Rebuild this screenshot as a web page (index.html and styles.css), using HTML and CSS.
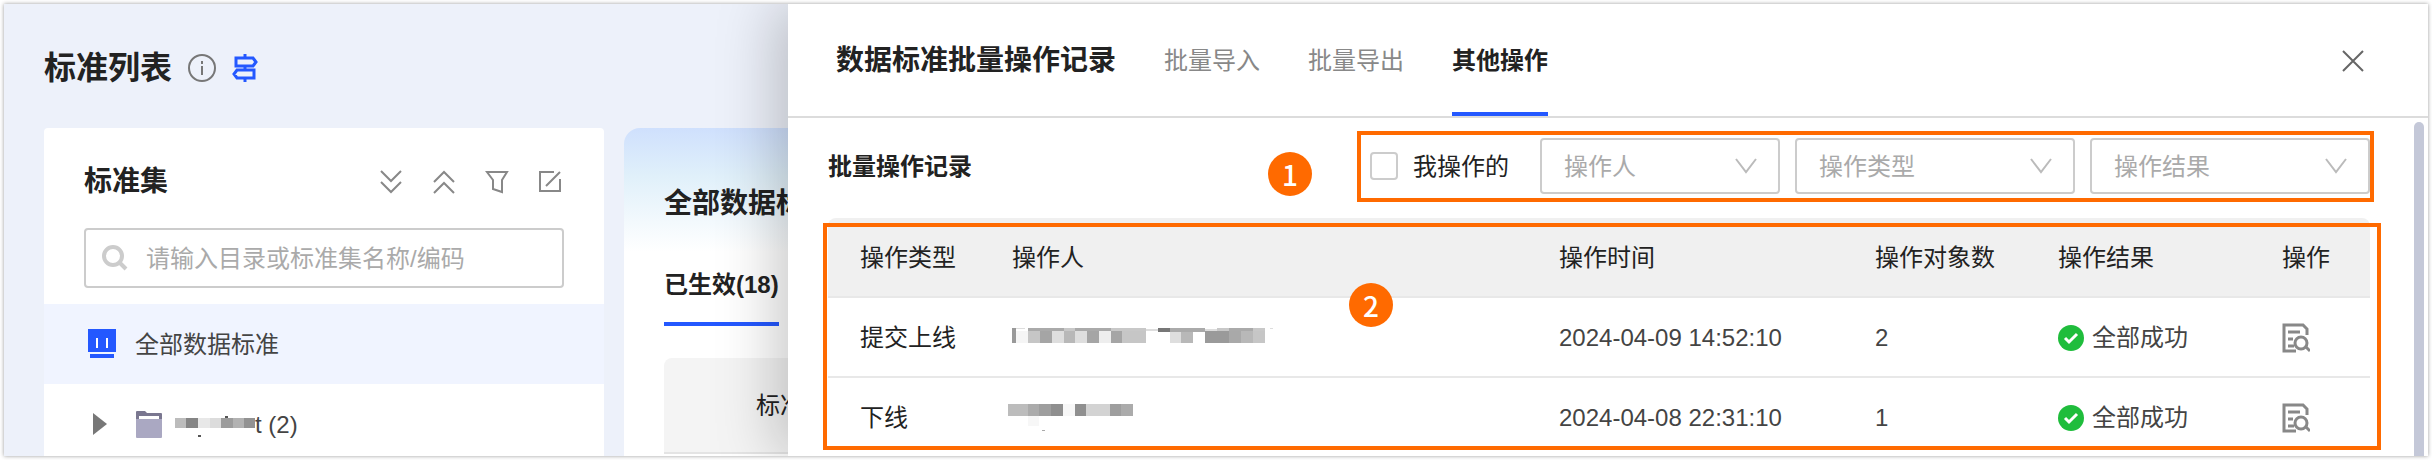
FILE: index.html
```html
<!DOCTYPE html>
<html lang="zh-CN">
<head>
    <meta charset="UTF-8">
    <meta name="viewport" content="width=device-width, initial-scale=1.0">
    <title>标准列表</title>
    <link rel="stylesheet" href="styles.css">
</head>
<body>
    <div class="frame">
        <main class="page">
            <div class="page-head">
                <h1>标准列表</h1>
                <svg class="info" width="28" height="28" viewBox="0 0 28 28" fill="none" stroke="#777" stroke-width="2">
                    <circle cx="14" cy="14" r="13"/>
                    <path d="M14 12v9M14 7v3"/>
                </svg>
                <svg class="guide" width="26" height="28" viewBox="0 0 26 28" fill="none" stroke="#2458ff" stroke-width="3">
                    <path d="M4 4h17l3 4-3 4H4zM22 16H5l-3 4 3 4h17zM13 0v4M13 12v4M13 24v4"/>
                </svg>
            </div>

            <div class="columns">
                <section class="sets">
                    <div class="sets-head">
                        <h2>标准集</h2>
                        <div class="tools">
                            <button type="button" aria-label="展开">
                                <svg width="24" height="24" viewBox="0 0 24 24"><path d="M2 1l10 10L22 1M2 12l10 10 10-10"/></svg>
                            </button>
                            <button type="button" aria-label="收起">
                                <svg width="24" height="24" viewBox="0 0 24 24"><path d="M2 12L12 2l10 10M2 23l10-10 10 10"/></svg>
                            </button>
                            <button type="button" aria-label="筛选">
                                <svg width="24" height="24" viewBox="0 0 24 24"><path d="M2 2h20l-5 8v12l-9-3v-9z"/></svg>
                            </button>
                            <button type="button" aria-label="编辑">
                                <svg width="24" height="24" viewBox="0 0 24 24"><path d="M16 2H2v19h20V9M8 16L22 2"/></svg>
                            </button>
                        </div>
                    </div>
                    <div class="search">
                        <svg width="26" height="26" viewBox="0 0 26 26" fill="none" stroke="#ccc" stroke-width="4">
                            <circle cx="11" cy="11" r="9"/>
                            <path d="M17 17l7 7"/>
                        </svg>
                        <input type="text" aria-label="搜索" placeholder="请输入目录或标准集名称/编码">
                    </div>
                    <div class="tree-row all">
                        <svg width="30" height="30" viewBox="0 0 30 30">
                            <path fill="#2458ff" d="M1 0h28v23H1zM3 25h24v4H3z"/>
                            <path stroke="#fff" stroke-width="2" d="M10 9v10M20 9v10"/>
                        </svg>
                        <span>全部数据标准</span>
                    </div>
                    <div class="tree-row folder">
                        <svg class="arrow" width="14" height="24" viewBox="0 0 14 24"><path fill="#777" d="M0 1l14 11L0 23z"/></svg>
                        <svg width="26" height="27" viewBox="0 0 26 27">
                            <path fill="#7a7790" d="M0 1a1 1 0 0 1 1-1h8l2 2h14a1 1 0 0 1 1 1v10H0z"/>
                            <path fill="#fff" d="M3 5h20v5H3z"/>
                            <path fill="#aaa8c2" d="M0 8h26v18a1 1 0 0 1-1 1H1a1 1 0 0 1-1-1z"/>
                        </svg>
                        <div class="folder-name">
                            <svg width="80" height="26" viewBox="0 0 80 26">
                                <path fill="#bcbcbc" d="M0 7h11v10H0z"/>
                                <path fill="#858585" d="M11 7h12v10H11z"/>
                                <path fill="#e8e8e8" d="M23 7h12v10H23z"/>
                                <path fill="#dcdcdc" d="M35 7h11v10H35z"/>
                                <path fill="#9c9c9c" d="M46 7h12v10H46z"/>
                                <path fill="#b2b2b2" d="M58 7h11v10H58z"/>
                                <path fill="#929292" d="M69 7h11v10H69z"/>
                                <path fill="#555" d="M23 24h3v2h-3zM50 5h3v2h-3z"/>
                            </svg>
                            <span>t (2)</span>
                        </div>
                    </div>
                </section>

                <section class="standards">
                    <h2>全部数据标准</h2>
                    <a class="state" href="#">已生效(18)</a>
                    <div class="grid-head">标准</div>
                </section>
            </div>
        </main>

        <aside class="drawer">
            <header class="drawer-head">
                <h2>数据标准批量操作记录</h2>
                <nav>
                    <a href="#">批量导入</a>
                    <a href="#">批量导出</a>
                    <a href="#" class="active">其他操作</a>
                </nav>
                <button type="button" class="close" aria-label="关闭">
                    <svg width="22" height="22" viewBox="0 0 22 22" fill="none" stroke="#666" stroke-width="2"><path d="M1 1l20 20M21 1L1 21"/></svg>
                </button>
            </header>

            <div class="drawer-body">
                <div class="toolbar">
                    <h3>批量操作记录</h3>
                    <form class="filters">
                        <input type="checkbox" id="mine">
                        <label for="mine">我操作的</label>
                        <div class="select short">
                            <select aria-label="操作人"><option>操作人</option></select>
                            <svg width="22" height="16" viewBox="0 0 22 16"><path d="M1 1l10 13L21 1"/></svg>
                        </div>
                        <div class="select">
                            <select aria-label="操作类型"><option>操作类型</option></select>
                            <svg width="22" height="16" viewBox="0 0 22 16"><path d="M1 1l10 13L21 1"/></svg>
                        </div>
                        <div class="select">
                            <select aria-label="操作结果"><option>操作结果</option></select>
                            <svg width="22" height="16" viewBox="0 0 22 16"><path d="M1 1l10 13L21 1"/></svg>
                        </div>
                        <div class="callout callout-filters"></div>
                        <span class="badge badge-filters">1</span>
                    </form>
                </div>

                <div class="records">
                    <table>
                        <colgroup>
                            <col class="c-type"><col class="c-user"><col class="c-time"><col class="c-count"><col class="c-result"><col class="c-action">
                        </colgroup>
                        <thead>
                            <tr>
                                <th>操作类型</th>
                                <th>操作人</th>
                                <th>操作时间</th>
                                <th>操作对象数</th>
                                <th>操作结果</th>
                                <th>操作</th>
                            </tr>
                        </thead>
                        <tbody>
                            <tr>
                                <td class="type">提交上线</td>
                                <td>
                                    <svg width="262" height="28" viewBox="0 0 262 28">
                                        <path fill="#999" d="M0 4h4v15H0z"/>
                                        <path fill="#f5f5f5" d="M4 7h12v12H4z"/>
                                        <path fill="#c6c6c6" d="M16 7h12v12H16zM110 7h24v12h-24zM241 7h12v12h-12z"/>
                                        <path fill="#a5a5a5" d="M28 7h12v12H28zM75 7h12v12H75zM99 7h11v12H99z"/>
                                        <path fill="#dedede" d="M40 7h12v12H40zM63 7h12v12H63zM158 7h11v12h-11z"/>
                                        <path fill="#b8b8b8" d="M52 7h11v12H52zM169 7h12v12h-12zM229 7h12v12h-12z"/>
                                        <path fill="#eee" d="M87 7h12v12H87z"/>
                                        <path fill="#9a9a9a" d="M193 7h24v12h-24z"/>
                                        <path fill="#a9a9a9" d="M217 7h12v12h-12z"/>
                                        <path fill="#777" d="M146 4h12v4h-12z"/>
                                        <path fill="#aaa" d="M16 4h36v3H16zM63 4h36v3H63zM158 4h35v4h-35zM217 4h24v3h-24z"/>
                                        <path fill="#c8c8c8" d="M52 4h11v3H52zM99 4h35v3H99zM205 4h12v3h-12zM241 4h12v3h-12z"/>
                                        <path fill="#ddd" d="M4 4h9v1H4zM134 5h12v2h-12zM193 5h12v2h-12zM258 4h3v1h-3z"/>
                                    </svg>
                                </td>
                                <td>2024-04-09 14:52:10</td>
                                <td>2</td>
                                <td>
                                    <div class="result">
                                        <svg width="26" height="26" viewBox="0 0 26 26"><circle cx="13" cy="13" r="13" fill="#1fbd3c"/><path d="M7 13l4 4 8-8" fill="none" stroke="#fff" stroke-width="3"/></svg>
                                        <span>全部成功</span>
                                    </div>
                                </td>
                                <td>
                                    <button type="button" class="detail" aria-label="查看详情">
                                        <svg width="28" height="30" viewBox="0 0 28 30"><path d="M25 12V6l-4-4H2v26h12M6 9h12M6 16h5M6 23h6M24 24l4 4"/><circle cx="19" cy="20" r="6"/></svg>
                                    </button>
                                </td>
                            </tr>
                            <tr>
                                <td class="type">下线</td>
                                <td>
                                    <svg class="shifted" width="126" height="38" viewBox="0 0 126 38">
                                        <path fill="#bcbcbc" d="M0 5h20v12H0z"/>
                                        <path fill="#ababab" d="M20 5h11v12H20zM113 5h12v12h-12z"/>
                                        <path fill="#9e9e9e" d="M31 5h12v12H31zM102 5h11v12h-11z"/>
                                        <path fill="#8f8f8f" d="M43 5h12v12H43zM67 5h11v12H67z"/>
                                        <path fill="#d3d3d3" d="M78 5h24v12H78z"/>
                                        <path fill="#f7f7f7" d="M55 5h12v12H55zM20 17h11v10H20z"/>
                                        <path fill="#aaa" d="M34 31h3v1h-3z"/>
                                    </svg>
                                </td>
                                <td>2024-04-08 22:31:10</td>
                                <td>1</td>
                                <td>
                                    <div class="result">
                                        <svg width="26" height="26" viewBox="0 0 26 26"><circle cx="13" cy="13" r="13" fill="#1fbd3c"/><path d="M7 13l4 4 8-8" fill="none" stroke="#fff" stroke-width="3"/></svg>
                                        <span>全部成功</span>
                                    </div>
                                </td>
                                <td>
                                    <button type="button" class="detail" aria-label="查看详情">
                                        <svg width="28" height="30" viewBox="0 0 28 30"><path d="M25 12V6l-4-4H2v26h12M6 9h12M6 16h5M6 23h6M24 24l4 4"/><circle cx="19" cy="20" r="6"/></svg>
                                    </button>
                                </td>
                            </tr>
                        </tbody>
                    </table>
                    <div class="callout callout-records"></div>
                    <span class="badge badge-records">2</span>
                </div>
            </div>
            <div class="scrollbar"></div>
        </aside>
    </div>
</body>
</html>
```

FILE: styles.css
```css
* {
    box-sizing: border-box;
}

body {
    margin: 0;
    padding: 4px;
    background-color: #fff;
    color: #444;
    font-family: "Liberation Sans", "Noto Sans CJK SC", sans-serif;
    font-size: 24px;
    line-height: 36px;
}

h1, h2, h3 {
    margin: 0;
    color: #222;
    font-weight: bold;
}

h1 {
    font-size: 32px;
}

h2 {
    font-size: 28px;
}

h3 {
    padding-top: 2px;
    font-size: 24px;
}

a {
    color: inherit;
    text-decoration: none;
}

button {
    display: flex;
    padding: 0;
    border: none;
    background: none;
}

svg {
    display: block;
    flex: none;
}

input, select {
    font: inherit;
}

.frame {
    position: relative;
    height: calc(100vh - 8px);
    overflow: hidden;
    background-color: #edf1fa;
    box-shadow: 0 0 4px rgba(0, 0, 0, 0.4);
}

/* page behind the drawer */
.page {
    padding: 0 40px;
}

.page-head {
    display: flex;
    align-items: center;
    gap: 16px;
    height: 124px;
    padding-top: 4px;
}

.columns {
    display: flex;
    gap: 20px;
}

.sets {
    width: 560px;
    min-height: 360px;
    flex: none;
    background-color: #fff;
    border-radius: 4px;
}

.sets-head {
    display: flex;
    justify-content: space-between;
    align-items: center;
    height: 100px;
    padding: 8px 42px 0 40px;
}

.tools {
    display: flex;
    gap: 29px;
}

.tools path {
    fill: none;
    stroke: #888;
    stroke-width: 2;
}

.search {
    display: flex;
    align-items: center;
    gap: 18px;
    height: 60px;
    margin: 0 40px 16px;
    padding: 0 16px;
    border: 2px solid #ccc;
    border-radius: 4px;
}

.search input {
    flex: 1;
    padding: 2px 0 0;
    border: none;
    outline: none;
    background: none;
}

.search input::placeholder {
    color: #aaa;
}

.tree-row {
    display: flex;
    align-items: center;
    height: 80px;
    padding-left: 43px;
}

.tree-row span {
    padding-top: 2px;
}

.all {
    gap: 18px;
    background-color: #f0f4ff;
}

.folder {
    gap: 13px;
}

.folder-name {
    display: flex;
    align-items: center;
}

.arrow {
    margin: 0 16px 0 6px;
}

.standards {
    flex: 1;
    min-height: 360px;
    padding: 58px 40px 0;
    border-radius: 16px;
    background: linear-gradient(#cfe0fd, #e0f0fa 48px, #fff 124px);
}

.state {
    display: inline-block;
    height: 64px;
    margin: 40px 0 32px;
    padding-top: 5px;
    border-bottom: 4px solid #2458ff;
    color: #222;
    font-weight: bold;
}

.grid-head {
    height: 96px;
    padding: 30px 92px;
    border-bottom: 2px solid #e4e4e4;
    border-radius: 8px 8px 0 0;
    background-color: #f4f4f4;
    color: #222;
}

/* drawer */
.drawer {
    position: absolute;
    top: 0;
    right: 0;
    bottom: 0;
    left: 784px;
    background-color: #fff;
    box-shadow: -12px 0 56px rgba(0, 0, 0, 0.22);
}

.drawer-head {
    display: flex;
    align-items: center;
    height: 114px;
    padding: 2px 64px 0 48px;
    border-bottom: 2px solid #dcdcdc;
}

.drawer-head nav {
    display: flex;
    gap: 48px;
    margin-left: 48px;
}

.drawer-head nav a {
    height: 110px;
    border-bottom: 4px solid transparent;
    color: #888;
    line-height: 110px;
}

.drawer-head nav .active {
    border-color: #2458ff;
    color: #222;
    font-weight: bold;
}

.close {
    margin-left: auto;
}

.drawer-body {
    padding: 20px 58px 0 40px;
}

.toolbar {
    display: flex;
    justify-content: space-between;
    align-items: center;
}

.filters {
    position: relative;
    display: flex;
    align-items: center;
    gap: 15px;
}

.filters input {
    width: 28px;
    height: 28px;
    margin: 0;
    appearance: none;
    border: 2px solid #ccc;
    border-radius: 4px;
}

.filters label {
    margin-right: 16px;
    padding-top: 2px;
    color: #222;
}

.select {
    display: grid;
    align-items: center;
    width: 280px;
    height: 56px;
}

.select.short {
    width: 240px;
}

.select select,
.select svg {
    grid-area: 1 / 1;
}

.select select {
    height: 56px;
    padding: 2px 22px 0;
    appearance: none;
    border: 2px solid #ccc;
    border-radius: 4px;
    background-color: #fff;
    color: #aaa;
}

.select svg {
    justify-self: end;
    margin-right: 23px;
    fill: none;
    stroke: #bbb;
    stroke-width: 2;
    pointer-events: none;
}

.records {
    position: relative;
    margin-top: 24px;
}

table {
    width: 100%;
    table-layout: fixed;
    border-collapse: separate;
    border-spacing: 0;
}

.c-type {
    width: 152px;
}

.c-time {
    width: 316px;
}

.c-count {
    width: 183px;
}

.c-result {
    width: 224px;
}

.c-action {
    width: 120px;
}

th, td {
    height: 80px;
    padding: 2px 0 0 32px;
    border-bottom: 2px solid #e8e8e8;
    text-align: left;
    white-space: nowrap;
}

th {
    background-color: #f0f0f0;
    color: #222;
    font-weight: normal;
}

th:first-child {
    border-top-left-radius: 8px;
}

th:last-child {
    border-top-right-radius: 8px;
}

.type {
    color: #222;
}

.shifted {
    margin-left: -4px;
}

.result {
    display: flex;
    align-items: center;
    gap: 8px;
}

.detail path,
.detail circle {
    fill: none;
    stroke: #888;
    stroke-width: 3;
}

.scrollbar {
    position: absolute;
    top: 118px;
    right: 4px;
    bottom: 0;
    width: 10px;
    border-radius: 5px 5px 0 0;
    background-color: #c4c8d8;
}

/* numbered callouts */
.callout {
    position: absolute;
    border: 4px solid #ff6a00;
    pointer-events: none;
}

.callout-filters {
    inset: -7px -4px -8px -13px;
}

.callout-records {
    inset: 5px -11px 8px -5px;
}

.badge {
    position: absolute;
    width: 44px;
    height: 44px;
    border-radius: 50%;
    background-color: #ff6a00;
    color: #fff;
    font-family: "Noto Sans CJK SC", sans-serif;
    font-size: 28px;
    font-weight: 500;
    line-height: 44px;
    text-align: center;
}

.badge-filters {
    top: 14px;
    left: -102px;
}

.badge-records {
    top: 65px;
    left: 521px;
}
```
